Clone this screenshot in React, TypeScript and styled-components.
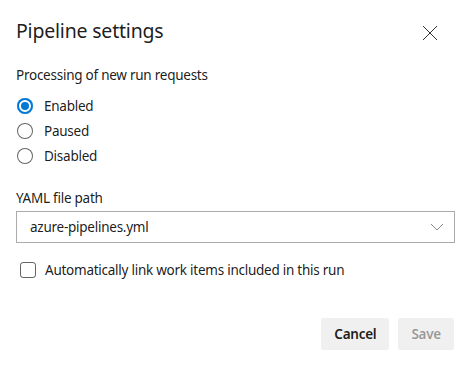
import React, { useState } from "react";
import styled, { createGlobalStyle } from "styled-components";

const FONT = `"Noto Sans", "Open Sans", "Liberation Sans", sans-serif`;

const Global = createGlobalStyle`
  html, body { margin: 0; padding: 0; background: #ffffff; }
  body { font-family: ${FONT}; color: rgba(0,0,0,0.9); letter-spacing: -0.25px; }
  * { box-sizing: border-box; }
`;

const Dialog = styled.div`
  width: 470px;
  height: 365px;
  background: #fff;
  padding: 0 15px 0 16px;
  display: flex;
  flex-direction: column;
`;

const Header = styled.div`
  display: flex;
  justify-content: space-between;
  align-items: flex-start;
  padding-top: 17px;
  height: 65px;
`;

const Title = styled.h1`
  margin: 0;
  font-size: 19.5px;
  line-height: 28px;
  font-weight: 400;
  letter-spacing: -0.2px;
  color: rgba(0,0,0,0.9);
`;

const CloseButton = styled.button`
  width: 32px;
  height: 32px;
  margin-right: 9px;
  border: none;
  background: transparent;
  display: flex;
  align-items: center;
  justify-content: center;
  padding: 0;
  cursor: pointer;
`;

const Label = styled.div<{ $mt?: number }>`
  font-size: 13.5px;
  line-height: 20px;
  margin-top: ${(p) => p.$mt ?? 0}px;
  color: rgba(0,0,0,0.9);
`;

const RadioGroup = styled.div`
  display: flex;
  flex-direction: column;
  margin-top: 8px;
`;

const RadioRow = styled.label`
  display: flex;
  align-items: center;
  height: 25px;
  font-size: 13.5px;
  gap: 11px;
  padding-left: 1px;
  cursor: pointer;
`;

const RadioCircle = styled.span<{ $checked: boolean }>`
  width: 16px;
  height: 16px;
  border-radius: 50%;
  flex: none;
  border: ${(p) => (p.$checked ? "none" : "1px solid rgba(0,0,0,0.6)")};
  background: ${(p) => (p.$checked ? "#0078d4" : "#fff")};
  box-shadow: ${(p) =>
    p.$checked ? "inset 0 0 0 2px #0078d4, inset 0 0 0 4px #fff" : "none"};
`;

const Select = styled.div`
  margin-top: 3px;
  height: 32px;
  border: 1px solid rgba(0,0,0,0.33);
  display: flex;
  align-items: center;
  justify-content: space-between;
  padding: 0 10px 0 13px;
  font-size: 13.5px;
`;

const CheckRow = styled.label`
  margin-top: 15px;
  height: 24px;
  display: flex;
  align-items: center;
  gap: 9px;
  padding-left: 4px;
  font-size: 13.5px;
  cursor: pointer;
`;

const CheckBox = styled.span`
  width: 16px;
  height: 16px;
  border: 1px solid rgba(0,0,0,0.6);
  border-radius: 3px;
  flex: none;
`;

const Footer = styled.div`
  margin-top: 36px;
  display: flex;
  justify-content: flex-end;
  gap: 9px;
  padding-right: 1px;
`;

const Button = styled.button<{ $disabled?: boolean }>`
  height: 32px;
  padding: 0 13px;
  border: none;
  border-radius: 2px;
  background: rgba(0,0,0,0.06);
  font-family: ${FONT};
  font-size: 13.5px;
  letter-spacing: -0.25px;
  font-weight: 600;
  color: ${(p) => (p.$disabled ? "rgba(0,0,0,0.38)" : "rgba(0,0,0,0.9)")};
  cursor: ${(p) => (p.$disabled ? "default" : "pointer")};
`;

const options = ["Enabled", "Paused", "Disabled"];

export default function App() {
  const [value, setValue] = useState("Enabled");
  return (
    <>
      <Global />
      <Dialog>
        <Header>
          <Title>Pipeline settings</Title>
          <CloseButton aria-label="Close">
            <svg width="16" height="16" viewBox="0 0 16 16">
              <path d="M1 1 L15 15 M15 1 L1 15" stroke="#333" strokeWidth="1" fill="none" />
            </svg>
          </CloseButton>
        </Header>
        <Label>Processing of new run requests</Label>
        <RadioGroup>
          {options.map((o) => (
            <RadioRow key={o} onClick={() => setValue(o)}>
              <RadioCircle $checked={value === o} />
              {o}
            </RadioRow>
          ))}
        </RadioGroup>
        <Label $mt={20}>YAML file path</Label>
        <Select>
          <span>azure-pipelines.yml</span>
          <svg width="14" height="8" viewBox="0 0 14 8">
            <path d="M1 1 L7 7 L13 1" stroke="#888" strokeWidth="1" fill="none" />
          </svg>
        </Select>
        <CheckRow>
          <CheckBox />
          Automatically link work items included in this run
        </CheckRow>
        <Footer>
          <Button>Cancel</Button>
          <Button $disabled>Save</Button>
        </Footer>
      </Dialog>
    </>
  );
}
